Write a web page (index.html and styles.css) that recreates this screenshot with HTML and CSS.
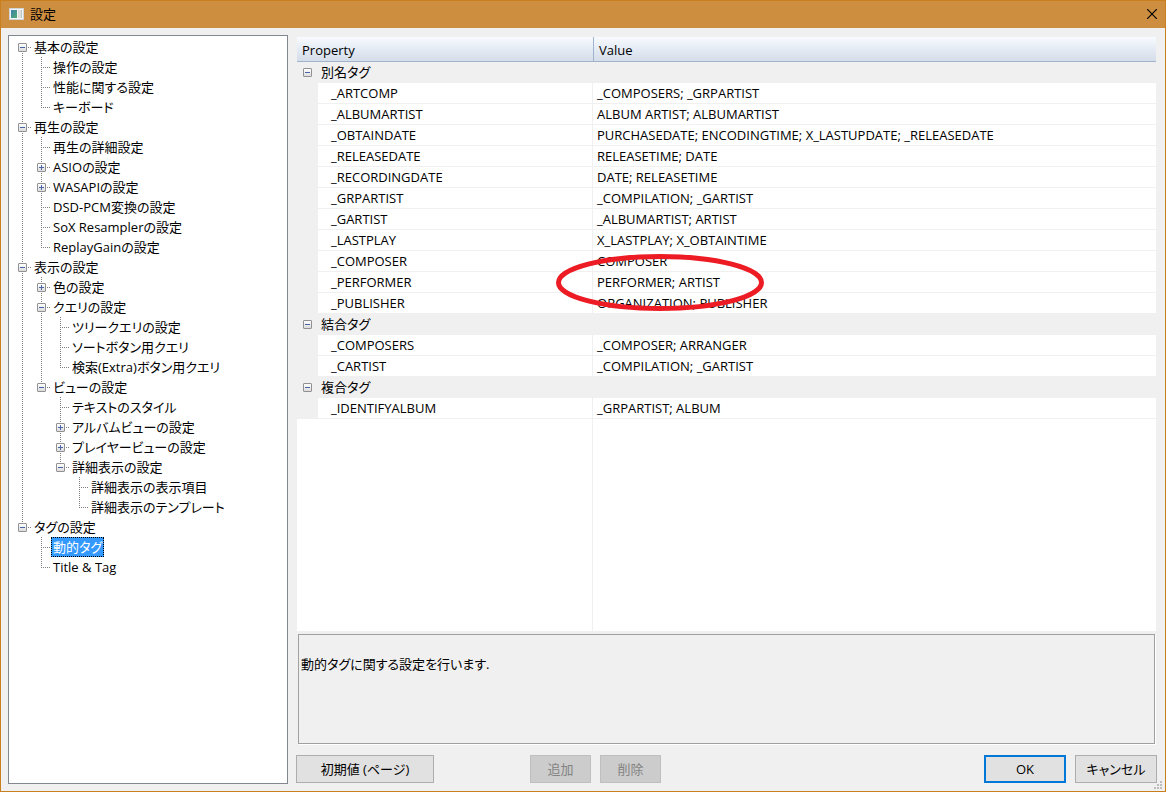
FILE: index.html
```html
<!DOCTYPE html>
<html lang="ja">
<head>
<meta charset="utf-8">
<title>設定</title>
<link rel="stylesheet" href="styles.css">
</head>
<body>
<div class="window">
  <header class="titlebar">
    <svg class="app-icon" viewBox="0 0 15 12" aria-hidden="true">
      <defs><linearGradient id="screen" x1="0" y1="0" x2="1" y2="1"><stop offset="0" stop-color="#3f7fb0"/><stop offset="1" stop-color="#4fae6c"/></linearGradient></defs>
      <rect x=".5" y=".5" width="14" height="11" fill="#f4f4f4" stroke="#d0d4d6"/>
      <rect x="2" y="2" width="6" height="8" fill="url(#screen)"/>
      <rect x="9" y="2" width="3" height="8" fill="#dedede"/>
      <rect x="12" y="2" width="1" height="8" fill="#b4cabd"/>
    </svg>
    <h1 class="title">設定</h1>
    <button class="close" type="button" aria-label="閉じる"><svg viewBox="0 0 10 10" width="10" height="10"><path d="M0 0L10 10M10 0L0 10" stroke="#000" stroke-width="1.2"/></svg></button>
  </header>
  <div class="content">
    <nav class="sidebar" aria-label="設定">
      <ul class="tree">
        <li><div class="row"><span class="branch"><button class="toggle" type="button" aria-label="閉じる"></button></span><a class="node" href="#">基本の設定</a></div>
          <ul>
            <li><div class="row"><span class="branch"></span><a class="node" href="#">操作の設定</a></div></li>
            <li><div class="row"><span class="branch"></span><a class="node" href="#">性能に関する設定</a></div></li>
            <li><div class="row"><span class="branch"></span><a class="node" href="#">キーボード</a></div></li>
          </ul>
        </li>
        <li><div class="row"><span class="branch"><button class="toggle" type="button" aria-label="閉じる"></button></span><a class="node" href="#">再生の設定</a></div>
          <ul>
            <li><div class="row"><span class="branch"></span><a class="node" href="#">再生の詳細設定</a></div></li>
            <li><div class="row"><span class="branch"><button class="toggle closed" type="button" aria-label="開く"></button></span><a class="node" href="#">ASIOの設定</a></div></li>
            <li><div class="row"><span class="branch"><button class="toggle closed" type="button" aria-label="開く"></button></span><a class="node" href="#">WASAPIの設定</a></div></li>
            <li><div class="row"><span class="branch"></span><a class="node" href="#">DSD-PCM変換の設定</a></div></li>
            <li><div class="row"><span class="branch"></span><a class="node" href="#">SoX Resamplerの設定</a></div></li>
            <li><div class="row"><span class="branch"></span><a class="node" href="#">ReplayGainの設定</a></div></li>
          </ul>
        </li>
        <li><div class="row"><span class="branch"><button class="toggle" type="button" aria-label="閉じる"></button></span><a class="node" href="#">表示の設定</a></div>
          <ul>
            <li><div class="row"><span class="branch"><button class="toggle closed" type="button" aria-label="開く"></button></span><a class="node" href="#">色の設定</a></div></li>
            <li><div class="row"><span class="branch"><button class="toggle" type="button" aria-label="閉じる"></button></span><a class="node" href="#">クエリの設定</a></div>
              <ul>
                <li><div class="row"><span class="branch"></span><a class="node" href="#">ツリークエリの設定</a></div></li>
                <li><div class="row"><span class="branch"></span><a class="node" href="#">ソートボタン用クエリ</a></div></li>
                <li><div class="row"><span class="branch"></span><a class="node" href="#">検索(Extra)ボタン用クエリ</a></div></li>
              </ul>
            </li>
            <li><div class="row"><span class="branch"><button class="toggle" type="button" aria-label="閉じる"></button></span><a class="node" href="#">ビューの設定</a></div>
              <ul>
                <li><div class="row"><span class="branch"></span><a class="node" href="#">テキストのスタイル</a></div></li>
                <li><div class="row"><span class="branch"><button class="toggle closed" type="button" aria-label="開く"></button></span><a class="node" href="#">アルバムビューの設定</a></div></li>
                <li><div class="row"><span class="branch"><button class="toggle closed" type="button" aria-label="開く"></button></span><a class="node" href="#">プレイヤービューの設定</a></div></li>
                <li><div class="row"><span class="branch"><button class="toggle" type="button" aria-label="閉じる"></button></span><a class="node" href="#">詳細表示の設定</a></div>
                  <ul>
                    <li><div class="row"><span class="branch"></span><a class="node" href="#">詳細表示の表示項目</a></div></li>
                    <li><div class="row"><span class="branch"></span><a class="node" href="#">詳細表示のテンプレート</a></div></li>
                  </ul>
                </li>
              </ul>
            </li>
          </ul>
        </li>
        <li><div class="row"><span class="branch"><button class="toggle" type="button" aria-label="閉じる"></button></span><a class="node" href="#">タグの設定</a></div>
          <ul>
            <li><div class="row"><span class="branch"></span><a class="node selected" href="#" aria-current="page">動的タグ</a></div></li>
            <li><div class="row"><span class="branch"></span><a class="node" href="#">Title &amp; Tag</a></div></li>
          </ul>
        </li>
      </ul>
    </nav>
    <main class="page">
      <div class="grid">
        <table class="properties">
          <colgroup><col class="col-gutter"><col class="col-name"><col></colgroup>
          <thead><tr><th colspan="2" scope="col">Property</th><th class="head-value" scope="col">Value</th></tr></thead>
          <tbody>
            <tr class="group"><td class="gutter"><button class="toggle" type="button" aria-label="閉じる"></button></td><th colspan="2">別名タグ</th></tr>
            <tr><td class="gutter"></td><td class="name">_ARTCOMP</td><td class="value">_COMPOSERS; _GRPARTIST</td></tr>
            <tr><td class="gutter"></td><td class="name">_ALBUMARTIST</td><td class="value">ALBUM ARTIST; ALBUMARTIST</td></tr>
            <tr><td class="gutter"></td><td class="name">_OBTAINDATE</td><td class="value">PURCHASEDATE; ENCODINGTIME; X_LASTUPDATE; _RELEASEDATE</td></tr>
            <tr><td class="gutter"></td><td class="name">_RELEASEDATE</td><td class="value">RELEASETIME; DATE</td></tr>
            <tr><td class="gutter"></td><td class="name">_RECORDINGDATE</td><td class="value">DATE; RELEASETIME</td></tr>
            <tr><td class="gutter"></td><td class="name">_GRPARTIST</td><td class="value">_COMPILATION; _GARTIST</td></tr>
            <tr><td class="gutter"></td><td class="name">_GARTIST</td><td class="value">_ALBUMARTIST; ARTIST</td></tr>
            <tr><td class="gutter"></td><td class="name">_LASTPLAY</td><td class="value">X_LASTPLAY; X_OBTAINTIME</td></tr>
            <tr><td class="gutter"></td><td class="name">_COMPOSER</td><td class="value">COMPOSER</td></tr>
            <tr><td class="gutter"></td><td class="name">_PERFORMER</td><td class="value marked">PERFORMER; ARTIST<svg class="mark" viewBox="0 0 208 57" aria-hidden="true"><ellipse cx="104" cy="28.5" rx="101.5" ry="26" fill="none" stroke="#ed1c24" stroke-width="5"/></svg></td></tr>
            <tr><td class="gutter"></td><td class="name">_PUBLISHER</td><td class="value">ORGANIZATION; PUBLISHER</td></tr>
            <tr class="group"><td class="gutter"><button class="toggle" type="button" aria-label="閉じる"></button></td><th colspan="2">結合タグ</th></tr>
            <tr><td class="gutter"></td><td class="name">_COMPOSERS</td><td class="value">_COMPOSER; ARRANGER</td></tr>
            <tr><td class="gutter"></td><td class="name">_CARTIST</td><td class="value">_COMPILATION; _GARTIST</td></tr>
            <tr class="group"><td class="gutter"><button class="toggle" type="button" aria-label="閉じる"></button></td><th colspan="2">複合タグ</th></tr>
            <tr><td class="gutter"></td><td class="name">_IDENTIFYALBUM</td><td class="value">_GRPARTIST; ALBUM</td></tr>
          </tbody>
        </table>
        <div class="filler"></div>
      </div>
      <p class="description">動的タグに関する設定を行います.</p>
      <div class="actions">
        <button class="btn reset" type="button">初期値 (ページ)</button>
        <div class="edit">
          <button class="btn small" type="button" disabled>追加</button>
          <button class="btn small" type="button" disabled>削除</button>
        </div>
        <div class="confirm">
          <button class="btn primary" type="button">OK</button>
          <button class="btn" type="button">キャンセル</button>
        </div>
      </div>
    </main>
  </div>
  <svg class="grip" viewBox="0 0 8 8" aria-hidden="true"><path d="M6 0h2v2h-2zM3 3h2v2h-2zM6 3h2v2h-2zM0 6h2v2h-2zM3 6h2v2h-2zM6 6h2v2h-2z" fill="#bdbdbd"/></svg>
</div>
</body>
</html>
```

FILE: styles.css
```css
* { box-sizing: border-box; }

body {
  margin: 0;
  font: 13px/20px "Open Sans", "Noto Sans CJK JP", sans-serif;
  font-feature-settings: "palt";
  color: #000;
}

button { font: inherit; font-feature-settings: inherit; color: inherit; }

ul { list-style: none; margin: 0; padding: 0; }

.window {
  position: relative;
  display: flex;
  flex-direction: column;
  min-height: 100vh;
  border: 1px solid #c97f1e;
  background: #f0f0f0;
}

.titlebar {
  display: flex;
  align-items: center;
  height: 27px;
  padding: 0 8px 2px;
  gap: 6px;
  background: #ce8e40;
}

.app-icon { width: 15px; height: 12px; }

.title { flex: 1; margin: 0; font-size: 13px; font-weight: 400; }

.close {
  display: flex;
  padding: 0;
  border: 0;
  background: none;
}

.content {
  flex: 1;
  display: flex;
  gap: 8px;
  padding: 7px 8px 7px 7px;
}

.sidebar {
  width: 280px;
  border: 1px solid #828790;
  background: #fff;
  padding: 1px 9px;
}

.tree li {
  background: repeating-linear-gradient(#808080 0 1px, transparent 1px 2px) 4px 0 / 1px 100% no-repeat;
}

.tree > li:first-child { background-position: 4px 10px; }
.tree li:last-child { background-size: 1px 10px; }
.tree ul { margin-left: 19px; }

.row { display: flex; height: 20px; }

.branch {
  display: flex;
  align-items: center;
  width: 14px;
  background: repeating-linear-gradient(90deg, #808080 0 1px, transparent 1px 2px) 4px 10px / 10px 1px no-repeat;
}

.toggle {
  display: block;
  width: 9px;
  height: 9px;
  padding: 0;
  border: 1px solid #919191;
  border-radius: 1px;
  background:
    linear-gradient(#4b63a7, #4b63a7) center / 5px 1px no-repeat,
    linear-gradient(#fff, #dcdcdc);
}

.toggle.closed {
  background:
    linear-gradient(#4b63a7, #4b63a7) center / 5px 1px no-repeat,
    linear-gradient(#4b63a7, #4b63a7) center / 1px 5px no-repeat,
    linear-gradient(#fff, #dcdcdc);
}

.node {
  padding: 0 2px;
  color: inherit;
  text-decoration: none;
  white-space: nowrap;
}

.selected {
  background: #3399ff;
  color: #fff;
  outline: 1px dotted #000;
  outline-offset: -1px;
}

.page { flex: 1; display: flex; flex-direction: column; min-width: 0; }

.grid {
  flex: 1;
  display: flex;
  flex-direction: column;
  margin: 2px 1px 0;
}

.properties {
  width: 100%;
  table-layout: fixed;
  border-collapse: separate;
  border-spacing: 0;
}

.col-gutter { width: 21px; }
.col-name { width: 275px; }

.properties th, .properties td {
  height: 21px;
  padding: 0;
  font-weight: 400;
  text-align: left;
  white-space: nowrap;
}

.properties thead th {
  height: 25px;
  padding: 2px 0 0 5px;
  border-bottom: 1px solid #a0b4cd;
  background: linear-gradient(#f8fbfe, #e4ebf4 50%, #d5dde9);
}

.properties .head-value { border-left: 1px solid #a0b4cd; }
.properties .group th { padding: 0 0 1px 3px; }
.properties .gutter { padding-left: 6px; }

.properties .name, .properties .value {
  border-bottom: 1px solid #f0f0f0;
  background: #fff;
}

.properties .name { padding-left: 13px; border-right: 1px solid #f0f0f0; }
.properties .value { padding-left: 4px; }
.properties .marked { position: relative; }

.mark {
  position: absolute;
  left: -37px;
  top: -18px;
  width: 208px;
  height: 57px;
}

.filler {
  flex: 1;
  background: linear-gradient(#f0f0f0, #f0f0f0) 295px 0 / 1px 100% no-repeat #fff;
}

.description {
  height: 110px;
  margin: 3px 2px 0;
  padding: 19px 2px;
  border: 1px solid #a0a0a0;
  box-shadow: 1px 1px #fff;
}

.actions {
  display: flex;
  margin: 11px 0 1px;
}

.edit, .confirm { display: flex; gap: 9px; }
.edit { margin: 0 auto 0 96px; }

.btn {
  width: 82px;
  height: 28px;
  padding: 0;
  border: 1px solid #adadad;
  background: #e1e1e1;
}

.reset { width: 138px; }
.small { width: 61px; }
.btn:disabled { border-color: #bfbfbf; background: #ccc; color: #838383; }
.primary { border: 2px solid #0078d7; }

.grip { position: absolute; right: 3px; bottom: 2px; width: 8px; height: 8px; }
```
